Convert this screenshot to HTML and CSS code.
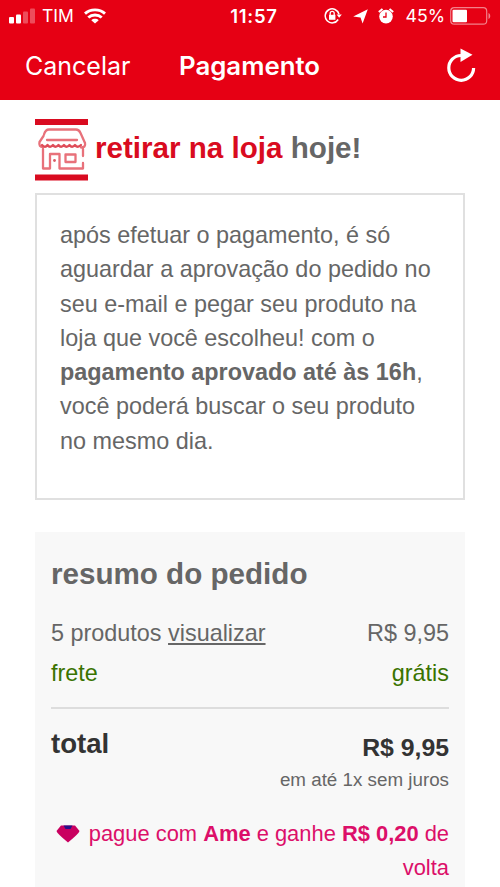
FILE: index.html
```html
<!DOCTYPE html>
<html lang="pt-BR">
<head>
<meta charset="utf-8">
<title>Pagamento</title>
<link rel="stylesheet" href="styles.css">
</head>
<body>
<header class="top">
  <div class="status">
    <div class="status-left">
      <svg class="signal" width="27" height="16" viewBox="0 0 27 16" fill="#fff"><rect x="0" y="9" width="5" height="6.500" rx="1"/><rect x="7" y="6.500" width="5" height="9" rx="1"/><g opacity=".3"><rect x="14" y="3.500" width="5" height="12" rx="1"/><rect x="21" y=".5" width="5" height="15" rx="1"/></g></svg>
      <span class="carrier">TIM</span>
      <svg class="wifi" width="22" height="16" viewBox="0 0 22 16" fill="none" stroke="#fff" stroke-width="2.900"><path d="M1 5.600C6.500.6 15.500.6 21 5.600"/><path d="M4.300 9.500c3.700-3.400 9.700-3.400 13.400 0"/><path d="M7.300 12.200c2-1.900 5.400-1.900 7.400 0L11 15.600z" fill="#fff" stroke="none"/></svg>
    </div>
    <span class="clock">11:57</span>
    <div class="status-right">
      <svg width="18" height="16" viewBox="0 0 18 16" fill="none" stroke="#fff" stroke-width="1.500"><path d="M14.200 11.500A7 7 0 1 1 15 6.200"/><path d="M12.600 6.600H17.800L15.200 9.700z" fill="#fff" stroke="none"/><rect x="5" y="6.800" width="6.400" height="5" fill="#fff" stroke="none"/><path d="M6.200 7V5.300a2 2 0 0 1 4 0V7" stroke-width="1.300"/></svg>
      <svg class="arrow" width="15" height="15" viewBox="0 0 15 15"><path fill="#fff" d="M14.800.2 9.600 14.600 7.500 8.600.2 7.500z"/></svg>
      <svg class="alarm" width="16" height="16" viewBox="0 0 16 16"><circle cx="8" cy="8.600" r="6.800" fill="#fff"/><path d="M.8 4 4.500.9M15.200 4 11.500.9" stroke="#fff" stroke-width="1.900"/><path d="M8 4.500V9H5" fill="none" stroke="#e60014" stroke-width="1.300"/></svg>
      <span class="percent">45%</span>
      <svg class="battery" width="41" height="18" viewBox="0 0 41 18"><rect x=".7" y=".7" width="36" height="16.500" rx="3.500" fill="none" stroke="#fff" stroke-opacity=".5" stroke-width="1.200"/><rect x="2.500" y="2.700" width="14.500" height="12.500" rx="1" fill="#fff"/><path d="M38.500 6c2.300.8 2.300 5.200 0 6z" fill="#fff" opacity=".5"/></svg>
    </div>
  </div>
  <nav class="nav">
    <span class="cancel">Cancelar</span>
    <h1 class="title">Pagamento</h1>
    <svg class="reload" width="32" height="36" viewBox="0 0 32 36"><path d="M17 7.500h-1A12.400 12.400 0 1 0 28.600 20" fill="none" stroke="#fff" stroke-width="3.200"/><path d="M15.500.5 27.500 6.700 15.500 14z" fill="#fff"/></svg>
  </nav>
</header>
<main>
  <h2 class="pickup">
    <svg width="53" height="62" viewBox="0 0 53 62"><path d="M0 0h53v6H0zM0 55.500h53v6H0z" fill="#d90b20"/><g fill="none" stroke="#e8717a" stroke-width="2.300" stroke-linejoin="round" stroke-linecap="round"><path d="M9 15.500Q10.500 10.500 14 10.500H41Q44 10.500 45.500 14L50 24Q51 28.500 46 28.500"/><path d="M8.500 17 4.500 23Q3.500 28 8 28"/><path d="M7 26q3 3.500 5.500 0 2.500 3.500 5.500 0 2.500 3.500 5.500 0 2.500 3.500 5.500 0 2.500 3.500 5.500 0 2.500 3.500 5.500 0 2.500 3.500 6 0" stroke="#df4c58"/><path d="M12 21h30"/><path d="M8 30v19.500h7V35h9.500v14.500H48V44M48 30v7M30.500 35.500h10v7.500h-10z"/></g><circle cx="19.500" cy="41.500" r="1.400" fill="#d95b65"/></svg>
    <span class="pickup-text"><span class="red">retirar na loja</span> hoje!</span>
  </h2>
  <p class="notice">após efetuar o pagamento, é só<br>aguardar a aprovação do pedido no<br>seu e-mail e pegar seu produto na<br>loja que você escolheu! com o<br><b>pagamento aprovado até às 16h</b>,<br>você poderá buscar o seu produto<br>no mesmo dia.</p>
  <section class="summary">
    <h2 class="summary-title">resumo do pedido</h2>
    <div class="row"><span>5 produtos <a class="link">visualizar</a></span><span>R$ 9,95</span></div>
    <div class="row shipping"><span>frete</span><span>grátis</span></div>
    <div class="row total"><b class="total-label">total</b><b class="total-value">R$ 9,95</b></div>
    <div class="installments">em até 1x sem juros</div>
    <div class="cashback">
      <svg width="24" height="18" viewBox="0 0 24 18"><path d="M5 .5h14l4.500 5.500Q23 8.500 12 17.500 1 8.500.5 6z" fill="#c90060"/><path d="M7.500.5h9L14.500 4h-5z" fill="#27108a"/></svg>
      <span>pague com <b>Ame</b> e ganhe <b>R$ 0,20</b> de<br>volta</span>
    </div>
  </section>
</main>
</body>
</html>
```
FILE: styles.css
```css
* { box-sizing: border-box; }
body { margin: 0; height: 887px; overflow: hidden; background: #fff; color: #666; font-family: "Liberation Sans", Arial, sans-serif; }
h1, h2, p { margin: 0; }
svg { display: block; flex: none; }
.top { height: 100px; background: #e60014; color: #fff; font-family: Inter, sans-serif; }
.status { height: 32px; display: grid; grid-template-columns: 1fr auto 1fr; align-items: center; padding: 0 9px; font-size: 18px; line-height: 32px; }
.status-left, .status-right { display: flex; align-items: center; }
.status-right { justify-content: flex-end; }
.carrier { margin-left: 6px; font-size: 17.5px; }
.wifi { margin-left: 10px; }
.clock { font-weight: 600; font-size: 18.5px; letter-spacing: .7px; padding-left: 8px; }
.arrow { margin-left: 11px; }
.alarm { margin-left: 10px; }
.percent { margin-left: 11px; font-size: 17.7px; }
.battery { margin-left: 5px; }
.nav { height: 68px; display: grid; grid-template-columns: 1fr auto 1fr; align-items: center; padding: 0 23px 0 25px; line-height: 68px; }
.cancel { font-size: 25px; }
.title { font-size: 25.8px; font-weight: 600; margin-right: 3px; }
.reload { justify-self: end; }
main { padding: 19px 35px 0; }
.pickup { display: flex; height: 62px; gap: 7px; font-size: 29.6px; line-height: 58px; }
.pickup-text { white-space: nowrap; }
.red { color: #d90b20; }
.notice { height: 307px; margin-top: 12px; padding: 23px 0 0 23px; border: 2px solid #e0e0e0; font-size: 23.4px; line-height: 34.3px; white-space: nowrap; }
.summary { height: 355px; margin-top: 32px; padding: 16px 16px 0; background: #f8f8f8; font-size: 23.4px; line-height: 34px; white-space: nowrap; }
.summary-title { font-size: 29.6px; line-height: 52px; }
.row { display: flex; justify-content: space-between; margin-top: 16px; }
.link { text-decoration: underline; text-decoration-thickness: 1.5px; text-underline-offset: 2px; }
.shipping { margin-top: 6px; padding-bottom: 17px; border-bottom: 2px solid #ddd; color: #3a7300; }
.total { margin-top: 18px; color: #333; }
.total-label { font-size: 27.6px; }
.total-value { font-size: 24.8px; padding-top: 4px; }
.installments { font-size: 18.8px; line-height: 26px; text-align: right; margin-top: 2px; }
.cashback { display: flex; justify-content: flex-end; gap: 9px; margin-top: 24px; color: #dc0f69; font-size: 21.9px; line-height: 34px; text-align: right; }
.cashback svg { margin-top: 8px; }
```
